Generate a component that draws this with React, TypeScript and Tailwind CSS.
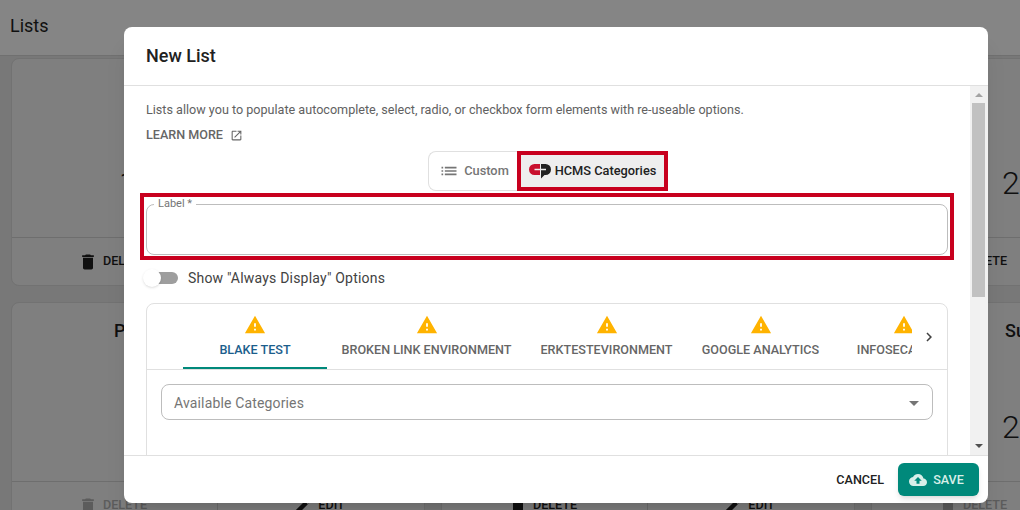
const roboto = "font-['Roboto',sans-serif]";

function MuiIcon({ d, className }: { d: string; className?: string }) {
  return (
    <svg viewBox="0 0 24 24" fill="currentColor" className={className}>
      <path d={d} />
    </svg>
  );
}

const icons = {
  list: "M3 13h2v-2H3v2zm0 4h2v-2H3v2zm0-8h2V7H3v2zm4 4h14v-2H7v2zm0 4h14v-2H7v2zM7 7v2h14V7H7z",
  warning: "M1 21h22L12 2 1 21zm12-3h-2v-2h2v2zm0-4h-2v-4h2v4z",
  trash: "M6 19c0 1.1.9 2 2 2h8c1.1 0 2-.9 2-2V7H6v12zM19 4h-3.5l-1-1h-5l-1 1H5v2h14V4z",
  open: "M19 19H5V5h7V3H5c-1.11 0-2 .9-2 2v14c0 1.1.89 2 2 2h14c1.1 0 2-.9 2-2v-7h-2v7zM14 3v2h3.59l-9.83 9.83 1.41 1.41L19 6.41V10h2V3h-7z",
  cloud: "M19.35 10.04C18.67 6.59 15.64 4 12 4 9.11 4 6.6 5.64 5.35 8.04 2.34 8.36 0 10.91 0 14c0 3.31 2.69 6 6 6h13c2.76 0 5-2.24 5-5 0-2.64-2.05-4.78-4.65-4.96zM14 13v4h-4v-4H7l5-5 5 5h-3z",
  edit: "M3 17.25V21h3.75L17.81 9.94l-3.75-3.75L3 17.25zM20.71 7.04c.39-.39.39-1.02 0-1.41l-2.34-2.34c-.39-.39-1.02-.39-1.41 0l-1.83 1.83 3.75 3.75 1.83-1.83z",
};

function CardAction({ icon, label, muted }: { icon: string; label: string; muted?: boolean }) {
  return (
    <div className={`flex items-center justify-center gap-[5px] pr-[4px] text-[12.6px] font-medium ${muted ? "text-[#5c5c5c]" : "text-[#101010]"}`}>
      <MuiIcon d={icon} className="size-5" />
      {label}
    </div>
  );
}

function ListCard({
  title,
  number,
  titleClass,
  numberClass,
  left,
  right,
}: {
  title: string;
  number: string;
  titleClass: string;
  numberClass: string;
  left: React.ReactNode;
  right: React.ReactNode;
}) {
  return (
    <div className="flex h-[228px] w-[414px] shrink-0 flex-col rounded-lg border border-[#727272] bg-[#7f7f7f]">
      <div className="flex h-[178px] flex-col">
        <div className={`h-[62px] pt-[14px] text-lg font-medium text-[#101010] ${titleClass}`}>{title}</div>
        <div className={`pt-[42px] text-[32px] font-light leading-10 text-[#101010] ${numberClass}`}>{number}</div>
      </div>
      <div className="grid h-12 grid-cols-2 border-t border-[#6e6e6e]">
        <div className="flex items-center justify-center border-r border-[#6e6e6e]">{left}</div>
        <div className="flex items-center justify-center">{right}</div>
      </div>
    </div>
  );
}

function Background() {
  return (
    <div className="h-[510px] overflow-hidden bg-[#787878]">
      <div className="flex h-[56px] items-center border-b border-[#707070] bg-[#858585] pb-1 pl-[10px] text-lg text-[#101010]">Lists</div>
      <div className="flex flex-col gap-4 pl-[11px] pt-[2px]">
        <div className="flex gap-4">
          <ListCard
            title=""
            number="1"
            titleClass="pl-[103px]"
            numberClass="pl-[107px]"
            left={<CardAction icon={icons.trash} label="DELETE" />}
            right={<CardAction icon={icons.edit} label="EDIT" />}
          />
          <ListCard
            title=""
            number=""
            titleClass=""
            numberClass=""
            left={<CardAction icon={icons.trash} label="DELETE" />}
            right={<CardAction icon={icons.edit} label="EDIT" />}
          />
          <ListCard
            title=""
            number="2"
            titleClass=""
            numberClass="pl-[130px]"
            left={<CardAction icon={icons.trash} label="DELETE" />}
            right={<CardAction icon={icons.edit} label="EDIT" />}
          />
        </div>
        <div className="flex gap-4">
          <ListCard
            title="P"
            number=""
            titleClass="pl-[102px]"
            numberClass=""
            left={<CardAction icon={icons.trash} label="DELETE" muted />}
            right={<CardAction icon={icons.edit} label="EDIT" />}
          />
          <ListCard
            title=""
            number=""
            titleClass=""
            numberClass=""
            left={<CardAction icon={icons.trash} label="DELETE" />}
            right={<CardAction icon={icons.edit} label="EDIT" />}
          />
          <ListCard
            title="Su"
            number="2"
            titleClass="pl-[133px]"
            numberClass="pl-[130px]"
            left={<CardAction icon={icons.trash} label="DELETE" muted />}
            right={<CardAction icon={icons.edit} label="EDIT" />}
          />
        </div>
      </div>
    </div>
  );
}

function HcmsLogo() {
  return (
    <svg viewBox="0 0 22 15" className="h-[15px] w-[22px]">
      <path d="M11 0H5.5A5.5 5.5 0 0 0 5.5 11H11V6.2H5.5V4.8H11z" fill="#c8102e" />
      <path d="M12 0h4.5a5.5 5.5 0 0 1 0 11H15.5L12 14.4V6.2h5V4.8h-5z" fill="#222" />
    </svg>
  );
}

function EnvTab({ label, className, active }: { label: string; className: string; active?: boolean }) {
  return (
    <div
      className={`relative flex h-[65px] shrink-0 flex-col items-center overflow-hidden pt-[10px] text-[12.6px] font-medium ${
        active ? "text-[#1b5e8c]" : "text-[#666666]"
      } ${className}`}
    >
      <MuiIcon d={icons.warning} className="size-[22px] shrink-0 text-[#ffb300]" />
      <span className="mt-[3px] whitespace-nowrap leading-[22px]">{label}</span>
      {active && <span className="absolute inset-x-0 bottom-0 h-[2px] bg-[#00897b]" />}
    </div>
  );
}

function Modal() {
  return (
    <div className="absolute left-[124px] top-[27px] flex h-[476px] w-[864px] flex-col overflow-hidden rounded-lg bg-white shadow-xl">
      <div className="flex h-[59px] shrink-0 items-center border-b border-[#e0e0e0] pl-[22px] text-lg font-medium text-[#212121]">New List</div>
      <div className="flex min-h-0 flex-1">
        <div className="min-w-0 flex-1 overflow-hidden pl-[22px] pr-[22px]">
          <p className="pt-[16px] text-[12.6px] leading-4 text-[#616161]">
            Lists allow you to populate autocomplete, select, radio, or checkbox form elements with re-useable options.
          </p>
          <div className="mt-[9px] flex items-center gap-[7px] text-[12.6px] font-medium leading-4 text-[#666666]">
            LEARN MORE
            <MuiIcon d={icons.open} className="size-[13px]" />
          </div>
          <div className="mt-[8px] flex justify-center pl-[2px]">
            <div className="flex h-[40px] items-stretch">
              <div className="flex w-[89px] items-center justify-center gap-[5px] rounded-l-lg border border-r-0 border-[#e0e0e0] pl-[2px] text-[12.8px] font-medium text-[#757575]">
                <MuiIcon d={icons.list} className="size-5" />
                Custom
              </div>
              <div className="flex w-[151px] items-center justify-center gap-1 border-4 border-[#c8001e] bg-[#eeeeee] text-[12.8px] font-medium text-[#212121]">
                <HcmsLogo />
                HCMS Categories
              </div>
            </div>
          </div>
          <div className="-ml-[6px] -mr-[6px] mt-[2px] h-[67px] border-4 border-[#c8001e] p-[2px]">
            <div className="relative mt-[5px] h-[51px] rounded-lg border border-[#bdbdbd]">
              <span className="absolute -top-[8px] left-[7px] bg-white px-1 text-[11px] leading-[14px] text-[#757575]">Label *</span>
            </div>
          </div>
          <div className="mt-[8px] flex h-5 items-center">
            <div className="relative -ml-[1px] h-3 w-[33px] rounded-full bg-[#9e9e9e]">
              <span className="absolute -left-[2px] -top-[3px] size-[18px] rounded-full bg-white shadow" />
            </div>
            <span className="ml-[10px] text-[14px] tracking-[0.2px] text-[#424242]">Show "Always Display" Options</span>
          </div>
          <div className="mt-[15px] h-[200px] rounded-t-lg border border-[#e0e0e0]">
            <div className="flex h-[66px] border-b border-[#e0e0e0]">
              <div className="flex w-[765px] shrink-0 overflow-hidden pl-[36px]">
                <EnvTab label="BLAKE TEST" active className="w-[144px]" />
                <EnvTab label="BROKEN LINK ENVIRONMENT" className="w-[199px]" />
                <EnvTab label="ERKTESTEVIRONMENT" className="w-[161px]" />
                <EnvTab label="GOOGLE ANALYTICS" className="w-[147px]" />
                <EnvTab label="INFOSECAUDITS" className="w-[140px]" />
              </div>
              <div className="flex flex-1 items-center justify-center pr-[1px] text-[#424242]">
                <MuiIcon d="M8.59 16.59 13.17 12 8.59 7.41 10 6l6 6-6 6z" className="size-[18px]" />
              </div>
            </div>
            <div className="px-[14px] pt-[14px]">
              <div className="flex h-[36px] items-center justify-between rounded-lg border border-[#bdbdbd] pl-3 pr-[13px] pt-[2px] text-[14px] tracking-[0.15px] text-[#757575]">
                Available Categories
                <span className="border-x-[5px] border-t-[5px] border-x-transparent border-t-[#757575]" />
              </div>
            </div>
          </div>
        </div>
        <div className="flex w-[18px] shrink-0 flex-col items-center bg-[#f1f1f1] pr-[1px]">
          <span className="mt-[7px] h-0 border-x-[4px] border-b-[4px] border-x-transparent border-b-[#a3a3a3]" />
          <span className="mt-[6px] h-[194px] w-[13px] shrink-0 bg-[#c1c1c1]" />
          <span className="mt-[147px] h-0 border-x-[4px] border-t-[4px] border-x-transparent border-t-[#505050]" />
        </div>
      </div>
      <div className="flex h-[48px] shrink-0 items-center justify-end gap-[14px] border-t border-[#e0e0e0] pr-[9px]">
        <span className="pt-[1px] text-[12.6px] font-medium text-[#212121]">CANCEL</span>
        <div className="flex h-[33px] w-[81px] items-center justify-center gap-[6px] rounded-md bg-[#00897b] pr-[4px] text-[12.6px] font-medium text-[#d8efe9] shadow-md">
          <MuiIcon d={icons.cloud} className="size-[18px]" />
          <span className="pt-[1px]">SAVE</span>
        </div>
      </div>
    </div>
  );
}

export default function App() {
  return (
    <div className={`relative h-[510px] w-[1020px] overflow-hidden ${roboto}`}>
      <Background />
      <Modal />
    </div>
  );
}
